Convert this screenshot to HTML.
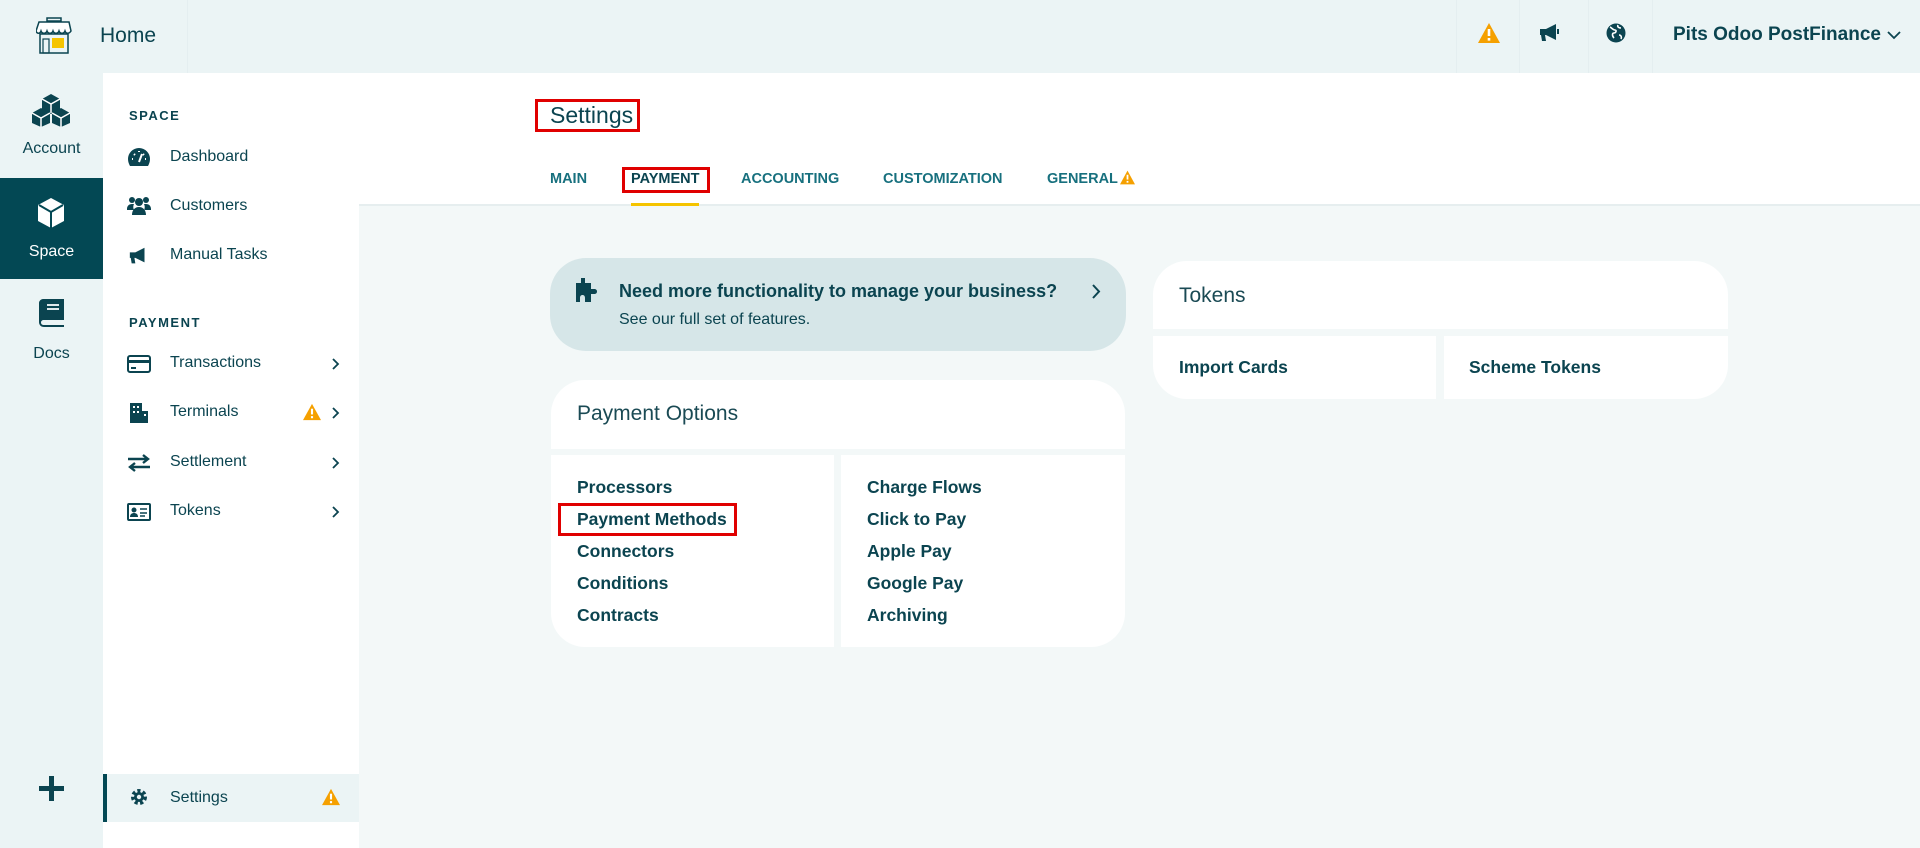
<!DOCTYPE html>
<html><head><meta charset="utf-8"><style>
*{box-sizing:border-box;margin:0;padding:0}
body{width:1920px;height:848px;overflow:hidden;background:#f3f8f8;font-family:"Liberation Sans",sans-serif;color:#0b4450;position:relative}
.a{position:absolute}
.hdr{left:0;top:0;width:1920px;height:73px;background:#ebf4f5}
.rail{left:0;top:73px;width:103px;height:775px;background:#ebf4f5}
.side{left:103px;top:73px;width:256px;height:775px;background:#fff}
.top{left:359px;top:73px;width:1561px;height:133px;background:#fff;border-bottom:2px solid #e6eeef}
.lbl{font-size:16px;color:#0b4450}
.h{font-size:13px;font-weight:bold;letter-spacing:1.5px}
.tab{font-size:14.5px;font-weight:bold;color:#17707e;top:171px}
.red{border:3px solid #e00000}
.card{background:#fff}
.lnk{font-size:17.5px;font-weight:bold;color:#0b4450}
.sep{top:0;width:1px;height:73px;background:#e4eef0}
</style></head><body>
<div class="a hdr"></div>
<div class="a sep" style="left:187px"></div>
<div class="a sep" style="left:1456px"></div>
<div class="a sep" style="left:1519px"></div>
<div class="a sep" style="left:1588px"></div>
<div class="a sep" style="left:1652px"></div>
<svg class="a" style="left:36px;top:17px" width="36" height="38" viewBox="0 0 36 38"><rect x="11" y="1" width="14" height="3" fill="none" stroke="#0b4450" stroke-width="1.5"/><path d="M3 5h30l2 9c-2 3-5 3-6 0-1 3-5 3-6 0-1 3-5 3-6 0-1 3-5 3-6 0-1 3-5 3-6 0-1 3-4 3-5 0z" fill="#fff" stroke="#0b4450" stroke-width="1.5"/><rect x="4" y="17" width="28" height="19" fill="none" stroke="#0b4450" stroke-width="1.5"/><rect x="7" y="22" width="6" height="14" fill="none" stroke="#0b4450" stroke-width="1.2"/><rect x="16" y="21" width="12" height="10" fill="#f5c400"/></svg>
<div class="a" style="left:100px;top:24px;font-size:21px">Home</div>
<svg class="a" style="left:1477px;top:22px" width="24" height="22" viewBox="0 0 24 22"><path d="M12 1L23 21H1z" fill="#f5a000"/><rect x="10.7" y="7" width="2.6" height="7" fill="#fff"/><rect x="10.7" y="16" width="2.6" height="2.6" fill="#fff"/></svg>
<svg class="a" style="left:1538px;top:23px" width="24" height="20" viewBox="0 0 24 20"><path d="M2 6h6l10-5v16L8 12H7l1 6H4l-1-6H2z" fill="#0b4450"/><path d="M20 6v5" stroke="#0b4450" stroke-width="2"/></svg>
<svg class="a" style="left:1606px;top:23px" width="20" height="20" viewBox="0 0 20 20"><circle cx="10" cy="10" r="9.5" fill="#0b4450"/><path d="M4 4c2 1 3 3 5 3s1 3-1 3-2 3 0 5M12 2c-1 2 1 3 3 3M13 12c2 0 3 2 2 4" stroke="#fff" stroke-width="1.6" fill="none"/></svg>
<div class="a" style="left:1673px;top:24px;font-size:19px;font-weight:bold">Pits Odoo PostFinance</div>
<svg class="a" style="left:1887px;top:31px" width="14" height="9" viewBox="0 0 14 9"><path d="M1 1l6 6 6-6" stroke="#0b4450" stroke-width="1.8" fill="none"/></svg>
<div class="a rail"></div>
<svg class="a" style="left:31px;top:94px" width="40" height="33" viewBox="0 0 40 33"><g fill="#0b4450"><path d="M20 0l9 5v10l-9 5-9-5V5z"/><path d="M10 14l9 5v10l-9 4-9-4V19z"/><path d="M30 14l9 5v10l-9 4-9-4V19z"/></g><g stroke="#fff" stroke-width="1.5" fill="none"><path d="M11 5l9 5 9-5M20 10v9M1 19l9 5 9-5M10 24v9M21 19l9 5 9-5M30 24v9"/></g></svg>
<div class="a" style="left:0;width:103px;text-align:center;top:140px;font-size:16px">Account</div>
<div class="a" style="left:0;top:178px;width:103px;height:101px;background:#034854"></div>
<svg class="a" style="left:36px;top:197px" width="30" height="32" viewBox="0 0 30 32"><path d="M15 1l13 7v16l-13 7-13-7V8z" fill="#fff"/><path d="M3 8l12 7 12-7M15 15v16" stroke="#034854" stroke-width="2" fill="none"/></svg>
<div class="a" style="left:0;width:103px;text-align:center;top:243px;font-size:16px;color:#fff">Space</div>
<svg class="a" style="left:37px;top:298px" width="28" height="30" viewBox="0 0 28 30"><path d="M6 1h21v21H7c-2 0-3 1-3 2.5S5 27 7 27h20v2H7c-3 0-5-2-5-5V5c0-2 2-4 4-4z" fill="#0b4450"/><path d="M10 7h12M10 11h12" stroke="#fff" stroke-width="1.8"/></svg>
<div class="a" style="left:0;width:103px;text-align:center;top:345px;font-size:16px">Docs</div>
<div class="a" style="left:39px;top:786px;width:25px;height:5px;background:#0b4450"></div>
<div class="a" style="left:49px;top:776px;width:5px;height:25px;background:#0b4450"></div>
<div class="a side"></div>
<div class="a h" style="left:129px;top:108px">SPACE</div>
<svg class="a" style="left:128px;top:148px" width="22" height="18" viewBox="0 0 22 18"><path d="M11 0a11 11 0 0 0-11 11c0 3 1 5 2 7h18c1-2 2-4 2-7A11 11 0 0 0 11 0z" fill="#0b4450"/><path d="M11 14l3-8M4 11h1M17 11h1M6 6l1 1M15 6l1 1M11 3v1" stroke="#fff" stroke-width="2"/></svg>
<div class="a lbl" style="left:170px;top:148px">Dashboard</div>
<svg class="a" style="left:127px;top:196px" width="24" height="20" viewBox="0 0 24 20"><g fill="#0b4450"><circle cx="5" cy="4" r="3"/><circle cx="19" cy="4" r="3"/><circle cx="12" cy="6" r="4"/><path d="M0 13c0-3 2-5 5-5h2c-1 2-1 4 0 6H0zM24 13c0-3-2-5-5-5h-2c1 2 1 4 0 6h7zM5 19c0-5 3-8 7-8s7 3 7 8z"/></g></svg>
<div class="a lbl" style="left:170px;top:197px">Customers</div>
<svg class="a" style="left:128px;top:246px" width="22" height="20" viewBox="0 0 24 20"><path d="M2 6h6l10-5v16L8 12H7l1 6H4l-1-6H2z" fill="#0b4450"/></svg>
<div class="a lbl" style="left:170px;top:246px">Manual Tasks</div>
<div class="a h" style="left:129px;top:315px">PAYMENT</div>
<svg class="a" style="left:127px;top:355px" width="24" height="18" viewBox="0 0 24 18"><rect x="1" y="1" width="22" height="16" rx="2" fill="none" stroke="#0b4450" stroke-width="2"/><rect x="1" y="5" width="22" height="3" fill="#0b4450"/><path d="M4 13h5" stroke="#0b4450" stroke-width="2"/></svg>
<div class="a lbl" style="left:170px;top:354px">Transactions</div>
<svg class="a" style="left:130px;top:403px" width="18" height="20" viewBox="0 0 18 20"><rect x="0" y="0" width="12" height="20" fill="#0b4450"/><rect x="12" y="8" width="6" height="12" fill="#0b4450"/><g fill="#fff"><rect x="3" y="3" width="2" height="2"/><rect x="7" y="3" width="2" height="2"/><rect x="3" y="8" width="2" height="2"/><rect x="7" y="8" width="2" height="2"/><rect x="14" y="11" width="2" height="2"/></g></svg>
<div class="a lbl" style="left:170px;top:403px">Terminals</div>
<svg class="a" style="left:302px;top:403px" width="20" height="18" viewBox="0 0 24 22"><path d="M12 1L23 21H1z" fill="#f5a000"/><rect x="10.7" y="7" width="2.6" height="7" fill="#fff"/><rect x="10.7" y="16" width="2.6" height="2.6" fill="#fff"/></svg>
<svg class="a" style="left:127px;top:454px" width="24" height="18" viewBox="0 0 24 18"><path d="M1 5h20M16 1l5 4-5 4M23 13H3M8 9l-5 4 5 4" stroke="#0b4450" stroke-width="2.4" fill="none"/></svg>
<div class="a lbl" style="left:170px;top:453px">Settlement</div>
<svg class="a" style="left:127px;top:503px" width="24" height="18" viewBox="0 0 24 18"><rect x="1" y="1" width="22" height="16" rx="1" fill="none" stroke="#0b4450" stroke-width="2"/><circle cx="7" cy="7" r="2.5" fill="#0b4450"/><path d="M3 14c0-3 2-4 4-4s4 1 4 4z" fill="#0b4450"/><path d="M13 6h7M13 10h7M13 13h5" stroke="#0b4450" stroke-width="1.6"/></svg>
<div class="a lbl" style="left:170px;top:502px">Tokens</div>
<svg class="a" style="left:332px;top:358px" width="8" height="12" viewBox="0 0 8 12"><path d="M1 1l5 5-5 5" stroke="#0b4450" stroke-width="1.8" fill="none"/></svg>
<svg class="a" style="left:332px;top:407px" width="8" height="12" viewBox="0 0 8 12"><path d="M1 1l5 5-5 5" stroke="#0b4450" stroke-width="1.8" fill="none"/></svg>
<svg class="a" style="left:332px;top:457px" width="8" height="12" viewBox="0 0 8 12"><path d="M1 1l5 5-5 5" stroke="#0b4450" stroke-width="1.8" fill="none"/></svg>
<svg class="a" style="left:332px;top:506px" width="8" height="12" viewBox="0 0 8 12"><path d="M1 1l5 5-5 5" stroke="#0b4450" stroke-width="1.8" fill="none"/></svg>
<div class="a" style="left:103px;top:774px;width:256px;height:48px;background:#ebf4f5;border-left:4px solid #034854"></div>
<svg class="a" style="left:130px;top:788px" width="18" height="18" viewBox="0 0 18 18"><circle cx="9" cy="9" r="6" fill="none" stroke="#0b4450" stroke-width="4" stroke-dasharray="3 2.3"/><circle cx="9" cy="9" r="5" fill="#0b4450"/><circle cx="9" cy="9" r="2.2" fill="#ebf4f5"/></svg>
<div class="a lbl" style="left:170px;top:789px">Settings</div>
<svg class="a" style="left:321px;top:788px" width="20" height="18" viewBox="0 0 24 22"><path d="M12 1L23 21H1z" fill="#f5a000"/><rect x="10.7" y="7" width="2.6" height="7" fill="#fff"/><rect x="10.7" y="16" width="2.6" height="2.6" fill="#fff"/></svg>
<div class="a top"></div>
<div class="a" style="left:550px;top:102px;font-size:23px">Settings</div>
<div class="a red" style="left:535px;top:99px;width:105px;height:33px"></div>
<div class="a tab" style="left:550px">MAIN</div>
<div class="a tab" style="left:631px;color:#0b4450">PAYMENT</div>
<div class="a red" style="left:622px;top:167px;width:88px;height:26px"></div>
<div class="a" style="left:631px;top:203px;width:68px;height:3px;background:#f5c400"></div>
<div class="a tab" style="left:741px">ACCOUNTING</div>
<div class="a tab" style="left:883px">CUSTOMIZATION</div>
<div class="a tab" style="left:1047px">GENERAL</div>
<svg class="a" style="left:1119px;top:170px" width="17" height="15" viewBox="0 0 24 22"><path d="M12 1L23 21H1z" fill="#f5a000"/><rect x="10.7" y="7" width="2.6" height="7" fill="#fff"/><rect x="10.7" y="16" width="2.6" height="2.6" fill="#fff"/></svg>
<div class="a" style="left:550px;top:258px;width:576px;height:93px;background:#d6e6e8;border-radius:36px"></div>
<svg class="a" style="left:576px;top:278px" width="22" height="24" viewBox="0 0 22 24"><path d="M5 0h4v5h6v6h3c2 0 3 1 3 2.5S20 16 18 16h-3v8H9v-4c0-2-1-3-2.5-3S4 18 4 20v4H0V5h5z" fill="#0b4450"/></svg>
<div class="a" style="left:619px;top:281px;font-size:18px;font-weight:bold">Need more functionality to manage your business?</div>
<div class="a" style="left:619px;top:311px;font-size:16px">See our full set of features.</div>
<svg class="a" style="left:1092px;top:284px" width="9" height="15" viewBox="0 0 9 15"><path d="M1 1l6 6.5L1 14" stroke="#0b4450" stroke-width="2" fill="none"/></svg>
<div class="a" style="left:551px;top:380px;width:574px;height:267px;border-radius:34px;overflow:hidden">
 <div class="a card" style="left:0;top:0;width:574px;height:69px"></div>
 <div class="a card" style="left:0;top:75px;width:283px;height:192px"></div>
 <div class="a card" style="left:290px;top:75px;width:284px;height:192px"></div>
</div>
<div class="a" style="left:577px;top:402px;font-size:21px;color:#1a4a54">Payment Options</div>
<div class="a lnk" style="left:577px;top:477px">Processors</div>
<div class="a lnk" style="left:577px;top:509px">Payment Methods</div>
<div class="a red" style="left:558px;top:503px;width:179px;height:33px"></div>
<div class="a lnk" style="left:577px;top:541px">Connectors</div>
<div class="a lnk" style="left:577px;top:573px">Conditions</div>
<div class="a lnk" style="left:577px;top:605px">Contracts</div>
<div class="a lnk" style="left:867px;top:477px">Charge Flows</div>
<div class="a lnk" style="left:867px;top:509px">Click to Pay</div>
<div class="a lnk" style="left:867px;top:541px">Apple Pay</div>
<div class="a lnk" style="left:867px;top:573px">Google Pay</div>
<div class="a lnk" style="left:867px;top:605px">Archiving</div>
<div class="a" style="left:1153px;top:261px;width:575px;height:138px;border-radius:34px;overflow:hidden">
 <div class="a card" style="left:0;top:0;width:575px;height:68px"></div>
 <div class="a card" style="left:0;top:75px;width:283px;height:63px"></div>
 <div class="a card" style="left:291px;top:75px;width:284px;height:63px"></div>
</div>
<div class="a" style="left:1179px;top:284px;font-size:21px;color:#1a4a54">Tokens</div>
<div class="a lnk" style="left:1179px;top:357px">Import Cards</div>
<div class="a lnk" style="left:1469px;top:357px">Scheme Tokens</div>
</body></html>
